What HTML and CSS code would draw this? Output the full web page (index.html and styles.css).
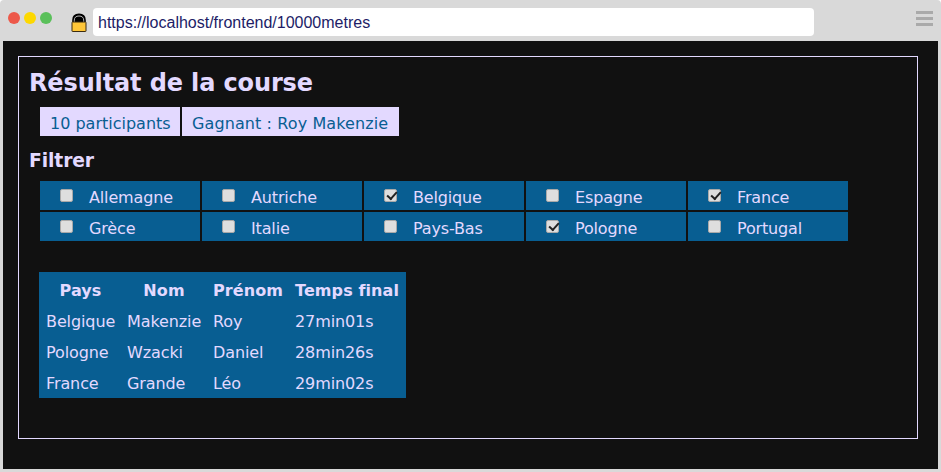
FILE: index.html
```html
<!DOCTYPE html>
<html lang="fr">
<head>
<meta charset="utf-8">
<title>Résultat de la course</title>
<link rel="stylesheet" href="styles.css">
</head>
<body>
<div class="browser">
  <header class="toolbar">
    <div class="lights"><i class="red"></i><i class="yellow"></i><i class="green"></i></div>
    <svg class="lock" width="16" height="20" viewBox="0 0 16 20"><path d="M2.2 9V7C2.2 3.5 4.3 1.5 8 1.5S13.8 3.5 13.8 7v2" fill="#000" stroke="#000" stroke-width="2"/><path d="M3.3 9V7.2C3.3 4.5 5 3 8 3s4.7 1.5 4.7 4.2V9" fill="none" stroke="#ccc" stroke-width=".9"/><rect x="1" y="9" width="14" height="9.5" rx=".5" fill="#ffc638" stroke="#3b2b10"/></svg>
    <div class="address">https://localhost/frontend/10000metres</div>
    <div class="menu"><i></i><i></i><i></i></div>
  </header>
  <main class="page">
    <section class="panel">
      <h1>Résultat de la course</h1>
      <div class="summary"><div class="participants">10 participants</div><div class="winner">Gagnant : Roy Makenzie</div></div>
      <h2>Filtrer</h2>
      <div class="filters">
        <label><input type="checkbox"><span>Allemagne</span></label>
        <label><input type="checkbox"><span>Autriche</span></label>
        <label><input type="checkbox" checked><span>Belgique</span></label>
        <label><input type="checkbox"><span>Espagne</span></label>
        <label><input type="checkbox" checked><span>France</span></label>
        <label><input type="checkbox"><span>Grèce</span></label>
        <label><input type="checkbox"><span>Italie</span></label>
        <label><input type="checkbox"><span>Pays-Bas</span></label>
        <label><input type="checkbox" checked><span>Pologne</span></label>
        <label><input type="checkbox"><span>Portugal</span></label>
      </div>
      <table class="results">
        <colgroup><col class="c1"><col class="c2"><col class="c3"><col class="c4"></colgroup>
        <thead><tr><th>Pays</th><th>Nom</th><th>Prénom</th><th>Temps final</th></tr></thead>
        <tbody>
          <tr><td>Belgique</td><td>Makenzie</td><td>Roy</td><td>27min01s</td></tr>
          <tr><td>Pologne</td><td>Wzacki</td><td>Daniel</td><td>28min26s</td></tr>
          <tr><td>France</td><td>Grande</td><td>Léo</td><td>29min02s</td></tr>
        </tbody>
      </table>
    </section>
  </main>
</div>
</body>
</html>
```
FILE: styles.css
```css
* { box-sizing: border-box; }
html { background: #fff; }
body { margin: 0; font-family: Verdana, "DejaVu Sans", sans-serif; font-size: 16px; color: #e3d9ff; overflow: hidden; }
.browser { width: 941px; height: 472px; padding: 0 3px 3px; background: #d9d9d9; border-radius: 4px 4px 0 0; }
.toolbar { height: 41px; display: flex; align-items: flex-start; }
.lights { display: flex; gap: 4px; padding: 12px 0 0 5px; }
.lights i { width: 12px; height: 12px; border-radius: 50%; }
.red { background: #ed594a; }
.yellow { background: #fdd800; }
.green { background: #5ac05a; }
.lock { margin: 13px 0 0 19px; }
.address { width: 721px; height: 28px; margin: 8px 0 0 6px; padding-left: 5px; background: #fff; border-radius: 4px; font: 16px/30px "Liberation Sans", Arial, sans-serif; color: #211c66; }
.menu { margin: 11px 0 0 102px; display: flex; flex-direction: column; gap: 3px; }
.menu i { width: 17px; height: 3px; background: #aaa; }
.page { height: 428px; padding: 15px; width: 935px; background: #111; }
.panel { width: 900px; height: 383px; border: 1px solid #e3d9ff; padding: 10px; }
h1 { margin: 0; font-size: 24px; line-height: 33px; height: 40px; letter-spacing: -0.13px; }
h2 { margin: 0; font-size: 18.72px; line-height: 28px; height: 34px; letter-spacing: -0.1px; }
.summary { display: flex; gap: 2px; height: 29px; margin: 0 0 11px 11px; line-height: 34px; color: #085e92; }
.summary > div { background: #e3d9ff; padding-left: 10px; white-space: nowrap; }
.participants { width: 140px; }
.winner { width: 216.5px; letter-spacing: 0.1px; }
.filters { display: grid; grid-template-columns: repeat(5, 160px); grid-auto-rows: 29px; gap: 2px; margin-left: 11px; }
.filters label { display: flex; padding-left: 20px; background: #085e92; line-height: 33px; letter-spacing: -0.15px; }
.filters input { appearance: none; width: 13px; height: 13px; margin: 8px 16px 0 0; border: 1px solid #a9a9a9; border-radius: 2px; background: #dedede; }
.filters input:checked::after { content: ""; display: block; width: 8px; height: 4px; margin: 2px 0 0 1.5px; border: solid #222; border-width: 0 0 2px 2px; transform: translateY(-0.5px) rotate(-48deg); }
.results { table-layout: fixed; border-collapse: collapse; width: 367px; margin: 31px 0 0 10px; background: #085e92; white-space: nowrap; letter-spacing: -0.1px; }
.results thead tr { height: 33px; }
.results tbody tr { height: 31px; }
.results th, .results td { padding: 3px 0 0 7px; line-height: 20px; text-align: left; }
.results th { padding: 5px 0 0 7px; letter-spacing: 0.1px; }
.results th:nth-child(-n+2) { padding-right: 5px; text-align: center; }
.c1 { width: 81px; }
.c2 { width: 86px; }
.c3 { width: 82px; }
.c4 { width: 118px; }
```
